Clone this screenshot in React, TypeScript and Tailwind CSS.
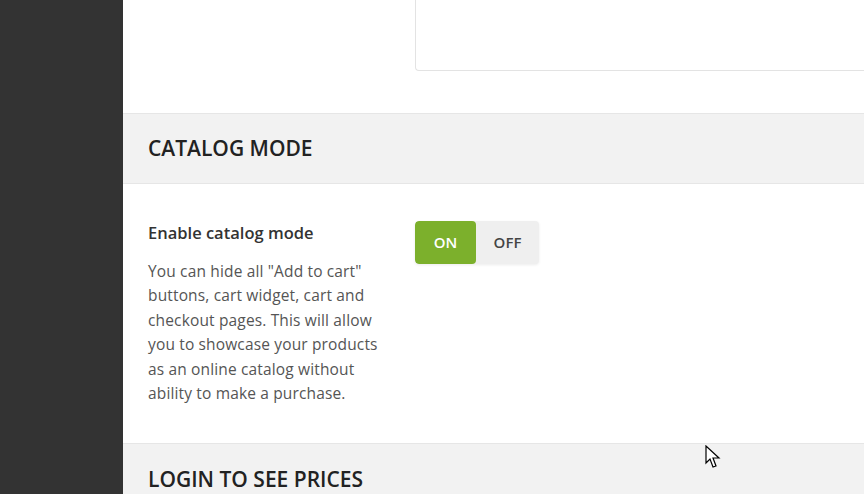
import React from 'react';

const desc = [
  'You can hide all "Add to cart"',
  'buttons, cart widget, cart and',
  'checkout pages. This will allow',
  'you to showcase your products',
  'as an online catalog without',
  'ability to make a purchase.',
];

export default function App() {
  return (
    <div className="flex h-[494px] w-[864px] overflow-hidden bg-white" style={{ fontFamily: '"Open Sans", "Noto Sans", sans-serif' }}>
      {/* sidebar */}
      <div className="w-[123px] shrink-0 bg-[#333333]" />

      <main className="relative flex-1 min-w-0 overflow-hidden">
        {/* previous field (textarea) */}
        <div className="flex h-[113px]">
          <div className="w-[292px] shrink-0" />
          <div className="h-[71px] flex-1 rounded-bl-[4px] border-b border-l border-[#e3e3e3] bg-white" />
        </div>

        {/* --- CATALOG MODE --- */}
        <div className="flex h-[71px] items-center border-y border-[#e6e6e6] bg-[#f2f2f2] pl-[25px]">
          <h2 className="text-[21px] font-semibold uppercase text-[#222]">Catalog mode</h2>
        </div>

        <div className="flex pl-[25px] pt-[37px] pb-[38px]">
          <div className="w-[267px] shrink-0">
            <div className="text-[16.5px] font-semibold leading-6 text-[#333]">Enable catalog mode</div>
            <p className="mt-[14px] text-[15.5px] leading-[24.4px] tracking-[0.15px] text-[#555]">
              {desc.map((line, i) => (
                <span key={i} className="block whitespace-nowrap">{line}</span>
              ))}
            </p>
          </div>
          <div>
            <div className="flex h-[43px] w-[124px] overflow-hidden rounded-[4px] bg-[#efefef] shadow-[0_1px_3px_rgba(0,0,0,0.08)]">
              <div className="flex w-[61px] items-center justify-center rounded-[4px] bg-[#7cb02c] text-[15px] font-semibold text-white">ON</div>
              <div className="flex flex-1 items-center justify-center text-[15px] font-semibold text-[#444]">OFF</div>
            </div>
          </div>
        </div>

        {/* --- LOGIN TO SEE PRICES --- */}
        <div className="flex h-[71px] items-start border-t border-[#e6e6e6] bg-[#f2f2f2] pl-[25px] pt-[20px]">
          <h2 className="text-[21px] font-semibold uppercase text-[#222]">Login to see prices</h2>
        </div>

        {/* mouse cursor */}
        <svg className="absolute left-[582px] top-[445px]" width="16" height="25" viewBox="0 0 16 25">
          <path d="M1 1 L1 18 L5 14 L8 22 L11 21 L8 13 L14 13 Z" fill="#fff" stroke="#000" strokeWidth="1.2" strokeLinejoin="miter" />
        </svg>
      </main>
    </div>
  );
}
